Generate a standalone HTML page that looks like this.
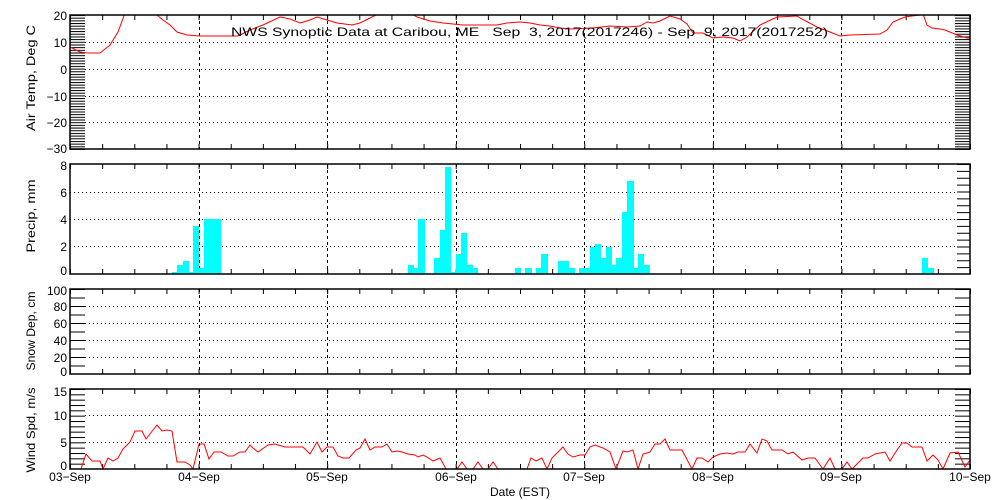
<!DOCTYPE html>
<html><head><meta charset="utf-8"><style>
html,body{margin:0;padding:0;background:#fff;width:1000px;height:500px;overflow:hidden}
svg{display:block}
text{font-family:"Liberation Sans",sans-serif;font-size:12px;fill:#000}
</style></head><body>
<svg width="1000" height="500" viewBox="0 0 1000 500" xmlns="http://www.w3.org/2000/svg">
<defs>
<pattern id="pT" x="0" y="15" width="20" height="2.68" patternUnits="userSpaceOnUse"><rect x="0" y="0" width="20" height="1" fill="#000"/></pattern>
<pattern id="pP" x="0" y="164" width="20" height="6.875" patternUnits="userSpaceOnUse"><rect x="0" y="0" width="20" height="1" fill="#000"/></pattern>
<pattern id="pS" x="0" y="289" width="20" height="8.5" patternUnits="userSpaceOnUse"><rect x="0" y="0" width="20" height="1" fill="#000"/></pattern>
<pattern id="pW" x="0" y="389" width="20" height="5.333" patternUnits="userSpaceOnUse"><rect x="0" y="0" width="20" height="1" fill="#000"/></pattern>
<pattern id="pX" x="70" y="0" width="32.143" height="10" patternUnits="userSpaceOnUse"><rect x="0" y="0" width="1" height="10" fill="#000"/></pattern>
<clipPath id="c1"><rect x="70" y="15" width="900" height="134"/></clipPath>
<clipPath id="c4"><rect x="70" y="389" width="900" height="80"/></clipPath>
</defs>

<rect x="70" y="15" width="15" height="135" fill="url(#pT)"/>
<rect x="955" y="15" width="15" height="135" fill="url(#pT)"/>
<rect x="957" y="164" width="13" height="110" fill="url(#pP)"/>
<rect x="70" y="289" width="15" height="85" fill="url(#pS)"/>
<rect x="955" y="289" width="15" height="85" fill="url(#pS)"/>
<rect x="70" y="389" width="15" height="80" fill="url(#pW)"/>
<rect x="955" y="389" width="15" height="80" fill="url(#pW)"/>

<g>
<rect x="70" y="15" width="901" height="5" fill="url(#pX)"/><rect x="70" y="144" width="901" height="5" fill="url(#pX)"/>
<rect x="70" y="164" width="901" height="5" fill="url(#pX)"/><rect x="70" y="269" width="901" height="5" fill="url(#pX)"/>
<rect x="70" y="289" width="901" height="5" fill="url(#pX)"/><rect x="70" y="369" width="901" height="5" fill="url(#pX)"/>
<rect x="70" y="389" width="901" height="5" fill="url(#pX)"/><rect x="70" y="464" width="901" height="5" fill="url(#pX)"/>
</g>

<g stroke="#000" stroke-width="1" stroke-dasharray="1,3">
<line x1="85" y1="42.5" x2="955" y2="42.5"/><line x1="85" y1="69.5" x2="955" y2="69.5"/><line x1="85" y1="96.5" x2="955" y2="96.5"/><line x1="85" y1="122.5" x2="955" y2="122.5"/>
<line x1="70" y1="192.5" x2="957" y2="192.5"/><line x1="70" y1="219.5" x2="957" y2="219.5"/><line x1="70" y1="246.5" x2="957" y2="246.5"/>
<line x1="85" y1="306.5" x2="955" y2="306.5"/><line x1="85" y1="323.5" x2="955" y2="323.5"/><line x1="85" y1="340.5" x2="955" y2="340.5"/><line x1="85" y1="357.5" x2="955" y2="357.5"/>
<line x1="85" y1="415.5" x2="955" y2="415.5"/><line x1="85" y1="442.5" x2="955" y2="442.5"/>
</g>
<g stroke="#000" stroke-width="1" stroke-dasharray="3,3">
<line x1="199.5" y1="15" x2="199.5" y2="149"/><line x1="327.5" y1="15" x2="327.5" y2="149"/><line x1="456.5" y1="15" x2="456.5" y2="149"/><line x1="584.5" y1="15" x2="584.5" y2="149"/><line x1="713.5" y1="15" x2="713.5" y2="149"/><line x1="841.5" y1="15" x2="841.5" y2="149"/>
<line x1="199.5" y1="164" x2="199.5" y2="274"/><line x1="327.5" y1="164" x2="327.5" y2="274"/><line x1="456.5" y1="164" x2="456.5" y2="274"/><line x1="584.5" y1="164" x2="584.5" y2="274"/><line x1="713.5" y1="164" x2="713.5" y2="274"/><line x1="841.5" y1="164" x2="841.5" y2="274"/>
<line x1="199.5" y1="289" x2="199.5" y2="374"/><line x1="327.5" y1="289" x2="327.5" y2="374"/><line x1="456.5" y1="289" x2="456.5" y2="374"/><line x1="584.5" y1="289" x2="584.5" y2="374"/><line x1="713.5" y1="289" x2="713.5" y2="374"/><line x1="841.5" y1="289" x2="841.5" y2="374"/>
<line x1="199.5" y1="389" x2="199.5" y2="469"/><line x1="327.5" y1="389" x2="327.5" y2="469"/><line x1="456.5" y1="389" x2="456.5" y2="469"/><line x1="584.5" y1="389" x2="584.5" y2="469"/><line x1="713.5" y1="389" x2="713.5" y2="469"/><line x1="841.5" y1="389" x2="841.5" y2="469"/>
</g>

<g fill="#00ffff">
<rect x="172" y="272" width="5" height="2"/><rect x="177" y="265" width="6" height="9"/><rect x="183" y="261" width="6" height="13"/><rect x="189" y="272" width="4" height="2"/><rect x="193" y="226" width="6" height="48"/><rect x="199" y="268" width="5" height="6"/><rect x="204" y="219" width="17" height="55"/>
<rect x="408" y="265" width="6" height="9"/><rect x="414" y="268" width="4" height="6"/><rect x="418" y="219" width="7" height="55"/><rect x="434" y="258" width="6" height="16"/><rect x="440" y="230" width="5" height="44"/><rect x="445" y="167" width="6" height="107"/><rect x="451" y="272" width="5" height="2"/><rect x="456" y="254" width="5" height="20"/><rect x="461" y="233" width="6" height="41"/><rect x="467" y="265" width="6" height="9"/><rect x="473" y="268" width="5" height="6"/>
<rect x="515" y="268" width="6" height="6"/><rect x="525" y="268" width="7" height="6"/><rect x="536" y="268" width="5" height="6"/><rect x="541" y="254" width="7" height="20"/><rect x="558" y="261" width="11" height="13"/><rect x="569" y="268" width="6" height="6"/><rect x="579" y="268" width="11" height="6"/><rect x="590" y="247" width="5" height="27"/><rect x="595" y="244" width="6" height="30"/><rect x="601" y="258" width="5" height="16"/><rect x="606" y="247" width="6" height="27"/><rect x="612" y="265" width="4" height="9"/><rect x="616" y="258" width="6" height="16"/><rect x="622" y="212" width="5" height="62"/><rect x="627" y="181" width="7" height="93"/><rect x="634" y="268" width="4" height="6"/><rect x="638" y="254" width="6" height="20"/><rect x="644" y="265" width="6" height="9"/>
<rect x="922" y="258" width="6" height="16"/><rect x="928" y="268" width="6" height="6"/>
</g>

<polyline clip-path="url(#c1)" fill="none" stroke="#ff0000" stroke-width="1" points="70,47 80,52 88,53 100,53 110,45 118,32 125,13 155,13 157,15 163,20 170,25 177,32 187,35 200,36 237,36 240,35 250,30 263,25 280,17 290,19 300,23 310,20 317,17 327,20 337,23 352,25 360,23 370,18 380,13 410,13 417,17 430,21 443,23 463,25 497,25 507,23 520,22 530,23 540,25 550,26 560,28 570,29 593,28 610,26 627,27 640,26 647,22 653,23 660,21 670,16 680,19 687,24 693,33 703,33 713,38 723,37 733,38 740,41 747,37 760,25 777,17 797,16 800,18 817,27 830,32 840,36 850,35 880,34 887,30 893,22 900,19 905,17 912,16 920,15 923,14 927,25 932,28 940,29 945,30 957,35 967,38 970,38"/>

<polyline clip-path="url(#c4)" fill="none" stroke="#ff0000" stroke-width="1" points="70,469 81,469 86,454 92,461 100,461 103,469 108,458 113,461 118,458 123,449 130,442 135,431 142,431 146,439 157,425 162,431 167,430 172,431 177,462 185,462 190,465 193,469 199,444 204,444 209,459 214,452 221,452 228,456 233,456 240,452 245,452 250,445 253,448 258,452 268,445 275,444 285,447 303,447 310,454 317,442 322,452 327,447 333,447 338,456 343,458 349,458 356,450 360,448 365,439 370,450 375,447 382,447 387,444 392,452 397,451 402,452 408,454 415,455 418,457 423,455 427,457 433,461 440,458 446,469 457,469 462,462 467,469 473,469 478,462 483,469 488,469 493,462 498,469 527,469 531,458 536,461 542,458 547,469 552,458 563,447 568,454 573,457 580,455 585,455 590,447 595,445 603,448 610,452 616,469 623,451 627,452 633,450 638,469 643,454 647,453 650,452 655,444 660,444 665,439 670,450 682,450 692,469 697,458 702,458 708,462 713,457 720,454 727,453 733,454 738,452 745,452 750,444 757,453 762,439 767,441 772,450 782,450 788,454 793,452 802,460 808,458 815,458 823,469 830,458 835,469 842,469 847,462 852,469 863,458 868,458 875,454 885,452 890,461 897,450 902,443 907,443 912,447 922,447 927,461 933,455 938,460 943,469 950,453 958,452 965,467 970,460"/>

<g fill="none" stroke="#000" stroke-width="1.5">
<rect x="70" y="15" width="900" height="134"/>
<rect x="70" y="164" width="900" height="110"/>
<rect x="70" y="289" width="900" height="85"/>
<rect x="70" y="389" width="900" height="80"/>
</g>

<text x="231" y="36" font-size="13" textLength="597" lengthAdjust="spacingAndGlyphs" xml:space="preserve">NWS Synoptic Data at Caribou, ME   Sep  3, 2017(2017246) - Sep  9, 2017(2017252)</text>

<g text-anchor="end" font-size="13">
<text x="67" y="20" font-size="13">20</text><text x="67" y="47" font-size="13">10</text><text x="67" y="74" font-size="13">0</text><text x="67" y="101" font-size="13">−10</text><text x="67" y="127" font-size="13">−20</text><text x="67" y="153" font-size="13">−30</text>
<text x="67" y="170" font-size="13">8</text><text x="67" y="197" font-size="13">6</text><text x="67" y="224" font-size="13">4</text><text x="67" y="251" font-size="13">2</text><text x="67" y="275" font-size="13">0</text>
<text x="67" y="295" font-size="13">100</text><text x="67" y="311" font-size="13">80</text><text x="67" y="328" font-size="13">60</text><text x="67" y="345" font-size="13">40</text><text x="67" y="362" font-size="13">20</text><text x="67" y="376" font-size="13">0</text>
<text x="67" y="396" font-size="13">15</text><text x="67" y="420" font-size="13">10</text><text x="67" y="447" font-size="13">5</text><text x="67" y="470" font-size="13">0</text>
</g>
<g text-anchor="middle">
<text transform="translate(35,78) rotate(-90)" font-size="14" textLength="106" lengthAdjust="spacingAndGlyphs">Air Temp, Deg C</text>
<text transform="translate(35,216) rotate(-90)" font-size="14" textLength="73" lengthAdjust="spacingAndGlyphs">Precip, mm</text>
<text transform="translate(35,331) rotate(-90)" font-size="13" textLength="79" lengthAdjust="spacingAndGlyphs">Snow Dep, cm</text>
<text transform="translate(35,430) rotate(-90)" font-size="13" textLength="85" lengthAdjust="spacingAndGlyphs">Wind Spd, m/s</text>
</g>
<g text-anchor="middle">
<text x="70" y="481">03−Sep</text><text x="199" y="481">04−Sep</text><text x="327" y="481">05−Sep</text><text x="456" y="481">06−Sep</text><text x="584" y="481">07−Sep</text><text x="713" y="481">08−Sep</text><text x="841" y="481">09−Sep</text><text x="970" y="481">10−Sep</text>
<text x="520" y="496">Date (EST)</text>
</g>
</svg>
</body></html>
